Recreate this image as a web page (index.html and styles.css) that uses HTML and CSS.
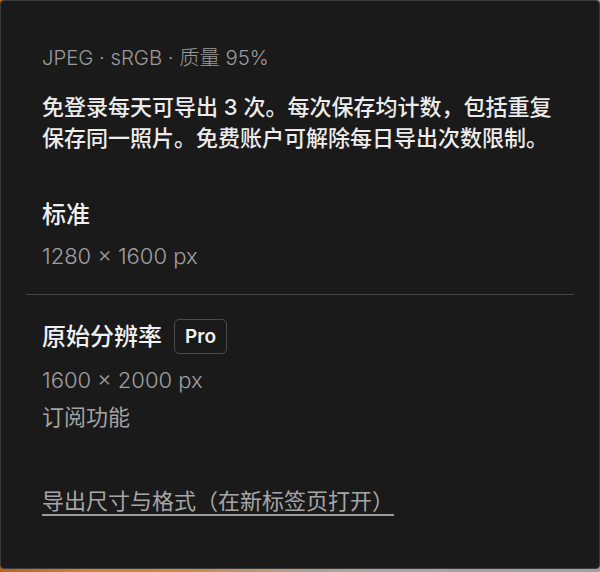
FILE: index.html
```html
<!DOCTYPE html>
<html lang="zh-CN">
<head>
<meta charset="utf-8">
<title>导出</title>
<link rel="stylesheet" href="styles.css">
</head>
<body>
<div class="panel">
  <div class="intro">
    <div class="meta">JPEG · sRGB · 质量 95%</div>
    <p class="note">免登录每天可导出 3 次。每次保存均计数，包括重复保存同一照片。免费账户可解除每日导出次数限制。</p>
    <div class="option">
      <div class="option-title">标准</div>
      <div class="option-dims">1280 × 1600 px</div>
    </div>
  </div>
  <hr class="divider">
  <div class="intro">
    <div class="option">
      <div class="option-head">
        <span class="option-title">原始分辨率</span>
        <span class="badge">Pro</span>
      </div>
      <div class="option-dims dims-pro">1600 × 2000 px</div>
      <div class="option-sub">订阅功能</div>
    </div>
    <a class="link" href="#">导出尺寸与格式（在新标签页打开）</a>
  </div>
</div>
</body>
</html>
```

FILE: styles.css
```css
html, body {
  margin: 0;
  padding: 0;
}
body {
  width: 600px;
  height: 572px;
  overflow: hidden;
  background: linear-gradient(90deg, #b5651f 0%, #d0843a 15%, #c98a48 30%, #b89a80 45%, #a9a6a2 60%, #a0a0a0 100%);
  font-family: Inter, "Noto Sans CJK SC", sans-serif;
}
.panel {
  box-sizing: border-box;
  width: 600px;
  height: 569px;
  background: #1a1a1a;
  border: 1px solid #3b3b3b;
  border-radius: 4px;
  padding: 43px 25px 0;
}
.intro {
  padding: 0 16px;
}
.meta {
  font-size: 20.3px;
  line-height: 28px;
  color: #9b9b9b;
  font-weight: 300;
}
.note {
  margin: 20px 0 0;
  font-size: 22px;
  line-height: 31px;
  color: #ececec;
  font-weight: 500;
}
.option {
  margin-top: 45px;
}
.option-title {
  font-size: 24px;
  line-height: 32px;
  color: #f0f0f0;
  font-weight: 500;
}
.option-dims {
  margin-top: 11px;
  font-size: 22px;
  line-height: 28px;
  color: #a0a0a0;
  font-weight: 300;
}
.divider {
  margin: 24px 0 0;
  border: 0;
  height: 1px;
  background: #464646;
}
.intro + .divider + .intro .option {
  margin-top: 24px;
}
.option-head {
  display: flex;
  align-items: center;
  gap: 12px;
  height: 35px;
}
.badge {
  box-sizing: border-box;
  height: 35px;
  display: inline-flex;
  align-items: center;
  padding: 0 10px;
  border: 1.5px solid #4a4a4a;
  border-radius: 5px;
  font-size: 19px;
  font-weight: 600;
  color: #f2f2f2;
}
.dims-pro {
  margin-top: 12px;
}
.option-sub {
  margin-top: 8px;
  font-size: 22px;
  line-height: 30px;
  color: #a3a3a3;
}
.link {
  display: inline-block;
  margin-top: 54px;
  font-size: 22px;
  line-height: 30px;
  color: #a6a6a6;
  text-decoration: underline;
  text-decoration-color: #9c9c9c;
  text-decoration-thickness: 2px;
  text-underline-offset: 5px;
}
```
